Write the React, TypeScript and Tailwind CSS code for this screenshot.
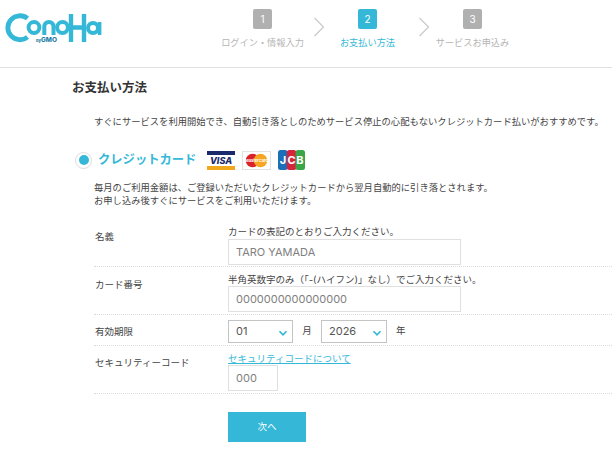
const font = { fontFamily: '"Inter", "Noto Sans CJK JP", sans-serif' };

const steps = [
  { n: "1", label: "ログイン・情報入力", active: false },
  { n: "2", label: "お支払い方法", active: true },
  { n: "3", label: "サービスお申込み", active: false },
];

const Logo = () => (
  <svg width="100" height="32" viewBox="0 0 100 32" fill="none" stroke="#35b8d8">
    <path d="M23.5 6.5 A12 12 0 1 0 23.5 25" strokeWidth="4.8" />
    <circle cx="30" cy="15.5" r="5.4" strokeWidth="4" />
    <path d="M40.3 23 V14.5 A4.6 4.6 0 0 1 49.5 14.5 V23" strokeWidth="4" />
    <circle cx="58.5" cy="15.5" r="5.4" strokeWidth="4" />
    <path d="M67 2 V30 M80 2 V30 M67 15.5 H80" strokeWidth="4.4" />
    <circle cx="89" cy="16" r="5" strokeWidth="4" />
    <path d="M95.6 10 V23" strokeWidth="3.6" />
    <text x="32" y="30" fontSize="6.5" fontWeight="800" fill="#1f7fa8" stroke="none" fontFamily="Inter, sans-serif">
      <tspan fontSize="4">by</tspan>GMO
    </text>
  </svg>
);

const Arrow = () => (
  <svg width="12" height="20" viewBox="0 0 12 20" fill="none" stroke="#c9c9c9" strokeWidth="1.2" className="mt-[8px]">
    <path d="M1.5 1 L10.5 10 L1.5 19" />
  </svg>
);

const Visa = () => (
  <svg width="28" height="19" viewBox="0 0 28 19">
    <rect width="28" height="19" fill="#fff" />
    <rect width="28" height="4" fill="#1a2a6c" />
    <rect y="15" width="28" height="4" fill="#f0a81e" />
    <text x="14" y="13" textAnchor="middle" fontSize="9" fontWeight="800" fontStyle="italic" fill="#1a2a6c" fontFamily="Inter, sans-serif">VISA</text>
  </svg>
);

const Master = () => (
  <svg width="29" height="19" viewBox="0 0 29 19">
    <rect x="0.5" y="0.5" width="28" height="18" fill="#fff" stroke="#e2e2e2" />
    <circle cx="10.5" cy="9.5" r="6.8" fill="#d9222a" />
    <circle cx="18.5" cy="9.5" r="6.8" fill="#f6a623" />
    <text x="14.5" y="11" textAnchor="middle" fontSize="4" fontWeight="700" fill="#fff" fontFamily="Inter, sans-serif">MasterCard</text>
  </svg>
);

const Jcb = () => (
  <svg width="27" height="20" viewBox="0 0 27 20">
    <rect x="0" y="0" width="9.5" height="20" rx="2.5" fill="#1a6fb8" />
    <rect x="8.8" y="0" width="9.5" height="20" rx="2.5" fill="#d6243a" />
    <rect x="17.5" y="0" width="9.5" height="20" rx="2.5" fill="#3aa648" />
    <g fontSize="11" fontWeight="700" fill="#fff" textAnchor="middle" fontFamily="Inter, sans-serif">
      <text x="5" y="14">J</text>
      <text x="13.5" y="14">C</text>
      <text x="22" y="14">B</text>
    </g>
  </svg>
);

const Row = ({ label, children, className, labelTop }: { label: string; children: React.ReactNode; className: string; labelTop: string }) => (
  <div className={`flex border-b border-dotted border-[#dcdcdc] ${className}`}>
    <div className={`w-[134px] pl-px text-[9.5px] text-[#444] leading-[14px] ${labelTop}`}>{label}</div>
    <div>{children}</div>
  </div>
);

const TextBox = ({ value, width }: { value: string; width: string }) => (
  <input
    readOnly
    value={value}
    style={font}
    className={`${width} block h-[26px] border border-[#e0e0e0] px-[7px] text-[11px] text-[#808080] bg-white outline-none`}
  />
);

const Select = ({ value, width }: { value: string; width: string }) => (
  <div className={`${width} h-[23px] border border-[#c4c4c4] flex items-center justify-between pl-[7px] pr-[2px] text-[11px] text-[#555]`}>
    <span>{value}</span>
    <svg width="14" height="14" viewBox="0 0 24 24" fill="none" stroke="#35b8d8" strokeWidth="3" className="mt-[3px]">
      <path d="M6 9 L12 15 L18 9" />
    </svg>
  </div>
);

function Step({ n, label, active, w }: { n: string; label: string; active: boolean; w: string }) {
  return (
    <div className={`${w} flex flex-col items-center`}>
      <div className={`w-[19px] h-[20px] rounded-[2px] flex items-center justify-center text-[10px] text-white ${active ? "bg-[#35b8d8]" : "bg-[#b0b0b0]"}`}>{n}</div>
      <div className={`mt-[7px] text-[9.2px] leading-[14px] whitespace-nowrap ${active ? "text-[#35b8d8]" : "text-[#b5b5b5]"}`}>{label}</div>
    </div>
  );
}

export default function App() {
  return (
    <div style={font} className="w-[612px] h-[452px] overflow-hidden bg-white text-[#333]">
      <header className="h-[68px] border-b border-[#e0e0e0] flex">
        <div className="pl-[4px] pt-[12px] w-[221px]">
          <Logo />
        </div>
        <div className="flex items-start pt-[9px]">
          <Step {...steps[0]} w="w-[83px]" />
          <div className="w-[22px] pl-[9px]"><Arrow /></div>
          <Step {...steps[1]} w="w-[83px]" />
          <div className="w-[22px] pl-[9px]"><Arrow /></div>
          <Step {...steps[2]} w="w-[83px]" />
        </div>
      </header>

      <main className="pl-[72px]">
        <h1 className="text-[12.5px] font-bold leading-[16px] mt-[12px] text-[#333]">お支払い方法</h1>
        <p className="pl-[22px] mt-[19px] text-[9.3px] leading-[14px] whitespace-nowrap text-[#444]">
          すぐにサービスを利用開始でき、自動引き落としのためサービス停止の心配もないクレジットカード払いがおすすめです。
        </p>

        <div className="flex items-center mt-[20px] h-[22px]">
          <div className="w-[17px] h-[17px] ml-[3px] rounded-full border border-[#dddddd] flex items-center justify-center">
            <div className="w-[10px] h-[10px] rounded-full bg-[#35b8d8]" />
          </div>
          <span className="ml-[6px] w-[109px] text-[12.3px] font-bold text-[#35b8d8]">クレジットカード</span>
          <div className="flex items-center gap-[7px]">
            <Visa />
            <Master />
            <Jcb />
          </div>
        </div>

        <p className="pl-[22px] mt-[10px] text-[9.3px] leading-[13px] text-[#444] whitespace-nowrap">
          毎月のご利用金額は、ご登録いただいたクレジットカードから翌月自動的に引き落とされます。
          <br />
          お申し込み後すぐにサービスをご利用いただけます。
        </p>

        <div className="ml-[22px] mt-[18px] w-[518px]">
          <Row label="名義" className="h-[42px]" labelTop="pt-[5px]">
            <div className="text-[9.5px] leading-[14px] text-[#444]">カードの表記のとおりご入力ください。</div>
            <TextBox value="TARO YAMADA" width="w-[233px]" />
          </Row>
          <Row label="カード番号" className="h-[48px]" labelTop="pt-[11px]">
            <div className="pt-[7px] text-[9.5px] leading-[12px] text-[#444]">半角英数字のみ（「-(ハイフン)」なし）でご入力ください。</div>
            <TextBox value="0000000000000000" width="w-[233px]" />
          </Row>
          <Row label="有効期限" className="h-[31px]" labelTop="pt-[10px]">
            <div className="flex items-center pt-[5px] text-[9.5px] text-[#444]">
              <Select value="01" width="w-[65px]" />
              <span className="w-[28px] text-center">月</span>
              <Select value="2026" width="w-[66px]" />
              <span className="ml-[9px]">年</span>
            </div>
          </Row>
          <Row label="セキュリティーコード" className="h-[48px]" labelTop="pt-[10px]">
            <div className="pt-[6px]">
              <a className="block w-fit text-[9.5px] leading-[13px] text-[#35b8d8] underline">セキュリティコードについて</a>
              <TextBox value="000" width="w-[50px]" />
            </div>
          </Row>
        </div>

        <button className="block ml-[156px] mt-[18px] w-[78px] h-[30px] bg-[#35b8d8] text-white text-[9.5px]">次へ</button>
      </main>
    </div>
  );
}
